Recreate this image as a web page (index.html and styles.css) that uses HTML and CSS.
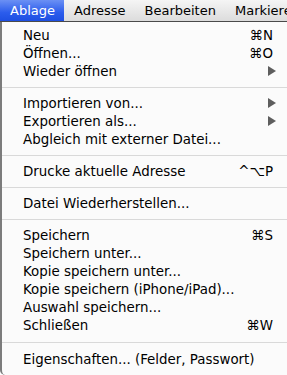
FILE: index.html
```html
<!DOCTYPE html>
<html lang="de">
<head>
<meta charset="utf-8">
<link rel="stylesheet" href="styles.css">
</head>
<body>
<div class="screen">
  <div class="menubar">
    <span class="title active">Ablage</span>
    <span class="title">Adresse</span>
    <span class="title">Bearbeiten</span>
    <span class="title">Markieren</span>
  </div>
  <div class="menu">
    <div class="item"><span class="label">Neu</span><span class="key">⌘N</span></div>
    <div class="item"><span class="label">Öffnen...</span><span class="key">⌘O</span></div>
    <div class="item"><span class="label">Wieder öffnen</span><span class="arrow"></span></div>
    <div class="sep"></div>
    <div class="item"><span class="label">Importieren von...</span><span class="arrow"></span></div>
    <div class="item"><span class="label">Exportieren als...</span><span class="arrow"></span></div>
    <div class="item"><span class="label">Abgleich mit externer Datei...</span></div>
    <div class="sep"></div>
    <div class="item"><span class="label">Drucke aktuelle Adresse</span><span class="key">^⌥P</span></div>
    <div class="sep"></div>
    <div class="item"><span class="label">Datei Wiederherstellen...</span></div>
    <div class="sep"></div>
    <div class="item"><span class="label">Speichern</span><span class="key">⌘S</span></div>
    <div class="item"><span class="label">Speichern unter...</span></div>
    <div class="item"><span class="label">Kopie speichern unter...</span></div>
    <div class="item"><span class="label">Kopie speichern (iPhone/iPad)...</span></div>
    <div class="item"><span class="label">Auswahl speichern...</span></div>
    <div class="item"><span class="label">Schließen</span><span class="key">⌘W</span></div>
    <div class="sep sep-last"></div>
    <div class="item"><span class="label">Eigenschaften... (Felder, Passwort)</span></div>
  </div>
</div>
</body>
</html>
```
FILE: styles.css
```css
html, body {
  margin: 0;
  padding: 0;
  background: #ffffff;
}
.screen {
  width: 287px;
  height: 375px;
  overflow: hidden;
  font-family: "DejaVu Sans", "Liberation Sans", sans-serif;
  color: #000;
}
.menubar {
  display: flex;
  height: 21px;
  white-space: nowrap;
  background: linear-gradient(#f5f5f5, #dcdcdc);
  border-bottom: 1px solid #4a4a4a;
  font-size: 13px;
  line-height: 21px;
}
.title {
  padding: 0 10px 0 9px;
  flex: none;
}
.title.active {
  padding: 0 9px 0 10px;
  margin-right: 1px;
  background: linear-gradient(#6b90f4, #2b5cec 60%, #1e4fe2);
  color: #fff;
}
.menu {
  height: 353px;
  padding-top: 4px;
  box-sizing: border-box;
  background: #fbfbfb;
  border-left: 2px solid #7c7c7c;
  border-bottom-left-radius: 5px;
  font-size: 13.4px;
}
.item {
  display: flex;
  align-items: center;
  height: 18px;
  padding: 0 11px 0 21px;
  white-space: nowrap;
}
.label {
  flex: 1;
}
.key {
  flex: none;
  padding-right: 3px;
}
.arrow {
  flex: none;
  width: 0;
  height: 0;
  border-top: 5px solid transparent;
  border-bottom: 5px solid transparent;
  border-left: 8px solid #5e5e5e;
}
.sep {
  height: 14px;
  display: flex;
  align-items: center;
}
.sep-last {
  height: 16px;
}
.sep::before {
  content: "";
  flex: 1;
  height: 1px;
  background: #d9d9d9;
}
```
